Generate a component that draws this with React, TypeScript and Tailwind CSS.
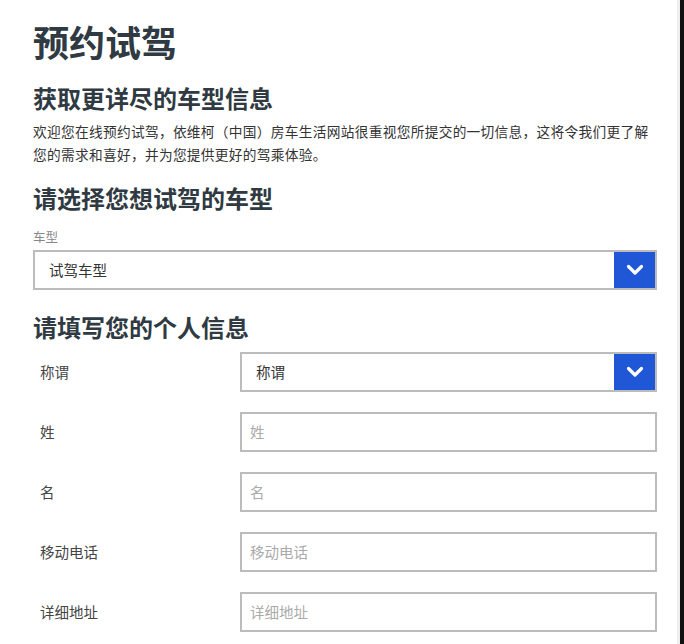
import React from "react";

// ─── Pieces ───────────────────────────────────────────────────────────────────

function Chevron() {
  return (
    <svg width="18" height="12" viewBox="0 0 18 12" fill="none">
      <path d="M2.5 2.5 L9 9 L15.5 2.5" stroke="#ffffff" strokeWidth="3.2" strokeLinecap="round" strokeLinejoin="round" />
    </svg>
  );
}

function SelectBox({ value }: { value: string }) {
  return (
    <div className="flex h-[40px] w-full items-stretch border-2 border-[#bcbcbc] bg-white">
      <div className="flex flex-1 items-center pl-[14px] text-[14.5px] text-[#333]">{value}</div>
      <div className="flex w-[41px] items-center justify-center bg-[#1f57d7]">
        <Chevron />
      </div>
    </div>
  );
}

function TextBox({ placeholder }: { placeholder: string }) {
  return (
    <div className="flex h-[40px] w-full items-center border-2 border-[#bcbcbc] bg-white pl-[8px] text-[14.5px] text-[#aaaaaa]">
      {placeholder}
    </div>
  );
}

const rows = ["姓", "名", "移动电话", "详细地址"];

// ─── Page ─────────────────────────────────────────────────────────────────────

export default function App() {
  return (
    <div
      className="flex h-[644px] w-[684px] overflow-hidden bg-white text-[#333]"
      style={{ fontFamily: '"Noto Sans CJK SC", "Noto Sans", sans-serif' }}
    >
      <div className="flex-1 pl-[33px] pr-[20px]">
        <h1 className="mt-[16px] text-[36px] font-bold leading-[50px] text-[#2f3a42]">预约试驾</h1>

        <h2 className="mt-[16px] text-[24px] font-bold leading-[32px] text-[#2f3a42]">获取更详尽的车型信息</h2>
        <p className="mt-[6px] whitespace-nowrap text-[13.7px] leading-[23px] tracking-[0.3px] text-[#333]">
          欢迎您在线预约试驾，依维柯（中国）房车生活网站很重视您所提交的一切信息，这将令我们更了解
          <br />
          您的需求和喜好，并为您提供更好的驾乘体验。
        </p>

        <h2 className="mt-[16px] text-[24px] font-bold leading-[32px] text-[#2f3a42]">请选择您想试驾的车型</h2>
        <div className="mt-[14px] text-[12.5px] leading-[18px] text-[#888]">车型</div>
        <div className="mt-[4px]">
          <SelectBox value="试驾车型" />
        </div>

        <h2 className="mt-[21px] text-[24px] font-bold leading-[32px] text-[#2f3a42]">请填写您的个人信息</h2>

        <div className="mt-[9px] flex flex-col gap-[20px]">
          <div className="flex items-center">
            <div className="w-[207px] pl-[7px] text-[14.5px] text-[#444]">称谓</div>
            <div className="flex-1">
              <SelectBox value="称谓" />
            </div>
          </div>
          {rows.map((r) => (
            <div key={r} className="flex items-center">
              <div className="w-[207px] pl-[7px] text-[14.5px] text-[#444]">{r}</div>
              <div className="flex-1">
                <TextBox placeholder={r} />
              </div>
            </div>
          ))}
        </div>
      </div>
      <div className="w-[3px] bg-[#eeeeee]" />
      <div className="w-[4px] bg-[#111]" />
    </div>
  );
}
